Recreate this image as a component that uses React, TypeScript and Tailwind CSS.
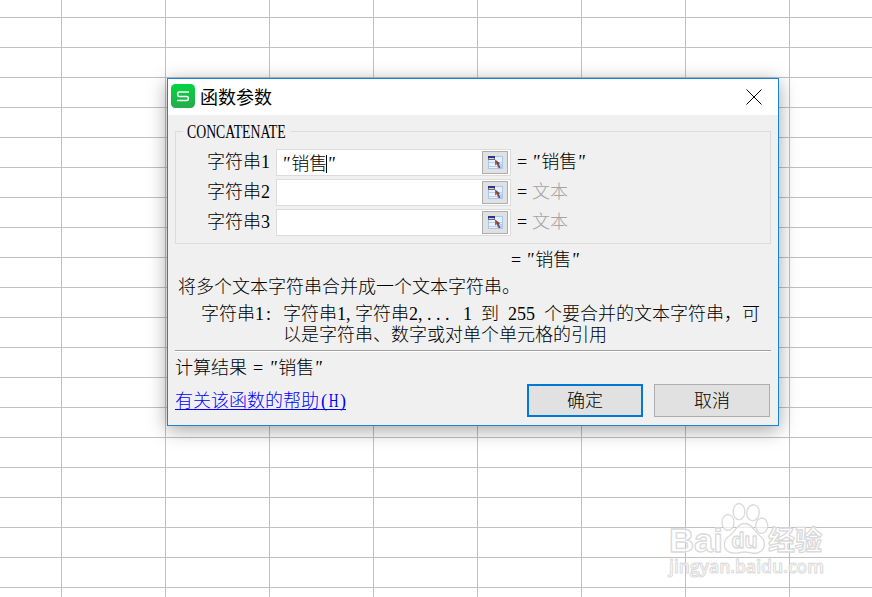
import type { ReactNode } from 'react';

interface Argument {
  label: string;
  value: string;
  preview?: string;
}

const args: Argument[] = [
  { label: '字符串1', value: '"销售"', preview: '"销售"' },
  { label: '字符串2', value: '' },
  { label: '字符串3', value: '' },
];

function SheetGrid() {
  return (
    <div className="grid w-[894px] grid-cols-[62px_repeat(8,104px)] grid-rows-[18px] auto-rows-[30px]">
      {Array.from({ length: 21 * 9 }, (_, i) => (
        <div key={i} className="border-b border-r border-[#c0c0c0]" />
      ))}
    </div>
  );
}

function Logo() {
  return (
    <svg width="24" height="24" viewBox="0 0 24 24" className="-mt-0.5">
      <defs>
        <linearGradient id="logo" x1="0" y1="0" x2="0" y2="1">
          <stop offset="0" stopColor="#00d540" />
          <stop offset="1" stopColor="#25ac4c" />
        </linearGradient>
      </defs>
      <rect width="24" height="24" rx="4.5" fill="url(#logo)" />
      <path d="M18 8H8.200Q6.700 8 6.700 9.500V10.900Q6.700 12.400 8.200 12.400H15.800Q17.300 12.400 17.300 13.900V15.100Q17.300 16.600 15.800 16.600H6" fill="none" stroke="#fff" strokeWidth="1.5" />
    </svg>
  );
}

function PickerIcon() {
  return (
    <svg width="15" height="13" viewBox="0 0 15 13" shapeRendering="crispEdges">
      <rect width="15" height="13" fill="#a5c8fb" />
      <rect x="7" y="1" width="7" height="3" fill="#e6f0ff" />
      <rect x="1" y="4" width="13" height="8" fill="#e8f1fd" />
      <rect x="9" y="8" width="5" height="4" fill="#b5cdfd" />
      <path d="M1 6.5h13M1 10.5h13" stroke="#c3cddd" />
      <rect width="7" height="2" fill="#2c3492" />
      <rect y="2" width="7" height="2" fill="#6a6a72" />
      <rect x="1" y="2" width="5" height="1" fill="#d4d4d8" />
      <g shapeRendering="auto">
        <path d="M7 3.5v6l1.6-1.2 2.2 3.9 1.5-.8-2-3.7 2-.3z" fill="#b9593f" />
        <path d="M7.400 4l4.600 3.500-1.600.3 1.900 3.800-.9.6-2.100-4z" fill="#5b5158" />
      </g>
    </svg>
  );
}

function Quoted({ children }: { children: ReactNode }) {
  return (
    <span>
      <i className="tracking-[1.6px]">"</i>{children}<i className="tracking-[1.6px]">"</i>
    </span>
  );
}

function ArgumentRow({ arg }: { arg: Argument }) {
  return (
    <div className="flex h-[27px] items-center">
      <span className="-mt-0.5 w-[94px] text-right">{arg.label}</span>
      <div className="ml-1.5 flex h-[27px] w-[235px] items-center border border-[#dcdcdc] bg-white pr-0.5">
        <div className="flex flex-1 items-center pl-[5px] pt-0.5">
          {arg.value && (
            <>
              <span><i className="tracking-[1.6px]">"</i>销售</span>
              <span className="-ml-px h-[18px] w-px bg-black" />
              <i>"</i>
            </>
          )}
        </div>
        <button className="flex h-[23px] w-[26px] items-center justify-center border border-[#adadad] bg-[#e1e1e1]">
          <PickerIcon />
        </button>
      </div>
      <div className="-mt-0.5 flex pl-1.5">
        <span className="w-[15px]">=</span>
        {arg.preview ? <Quoted>销售</Quoted> : <span className="text-[#a3a3a3]">文本</span>}
      </div>
    </div>
  );
}

function Watermark() {
  return (
    <svg className="absolute left-[664px] top-[498px]" width="170" height="84" viewBox="0 0 170 84">
      <g fill="#fff" fillOpacity="0.65" stroke="#dadada" strokeWidth="1.3" strokeLinejoin="round">
        <ellipse cx="64" cy="24.5" rx="6" ry="8" />
        <ellipse cx="75" cy="13.7" rx="5.8" ry="8.2" />
        <ellipse cx="89" cy="14.7" rx="6.2" ry="8" transform="rotate(8 89 14.7)" />
        <ellipse cx="97.7" cy="27.7" rx="6" ry="7.7" />
        <path d="M80.500 25.500C73 25.500 72 33 66.500 37C57 43 59 54 69 55C75 55.500 77 54 81 54C85 54 88 56 93 55C102 53 103 42 95 37C90 33 88 25.500 80.500 25.500Z" />
        <g className="font-['Liberation_Sans'] font-bold">
          <text x="5" y="54" fontSize="34" textLength="54" lengthAdjust="spacingAndGlyphs">Bai</text>
          <text x="67.5" y="50" fontSize="22" textLength="26" lengthAdjust="spacingAndGlyphs">du</text>
        </g>
        <text x="104" y="52" fontSize="27" textLength="54" className="font-['Noto_Sans_CJK_SC'] font-bold">经验</text>
        <text x="5" y="74.5" fontSize="18" strokeWidth="1" textLength="155" lengthAdjust="spacingAndGlyphs" className="font-['Open_Sans'] font-semibold">jingyan.baidu.com</text>
      </g>
    </svg>
  );
}

function FunctionDialog() {
  return (
    <div className="absolute left-[167px] top-[78px] flex h-[348px] w-[612px] flex-col border border-[#1883d7] bg-[#f0f0f0] shadow-[0_4px_18px_rgba(0,0,0,0.36)]">
      <div className="flex h-9 shrink-0 items-center bg-white pl-[3px] pr-4 font-['Noto_Sans_CJK_SC',sans-serif]">
        <Logo />
        <h1 className="-mt-0.5 ml-[5px] flex-1 text-[18px] font-normal leading-9">函数参数</h1>
        <svg width="16" height="16" viewBox="0 0 16 16" stroke="#000" className="-mt-px">
          <path d="M.5.500l15 15M15.500.500l-15 15" />
        </svg>
      </div>

      <div className="flex flex-1 flex-col px-[7px]">
        {/* Arguments */}
        <div className="mt-[5px] flex h-[124px] shrink-0 flex-col">
          <div className="flex h-[23px] shrink-0 items-center">
            <div className="mt-[11px] h-3 w-2 self-start border-l border-t border-[#dcdcdc]" />
            <div className="h-[23px] w-[108px] pl-1">
              <span className="block w-max origin-left scale-x-[0.765]">CONCATENATE</span>
            </div>
            <div className="mt-[11px] h-3 flex-1 self-start border-r border-t border-[#dcdcdc]" />
          </div>
          <div className="flex flex-1 flex-col gap-[3px] border-x border-b border-[#dcdcdc] pt-[6px]">
            {args.map((a) => <ArgumentRow key={a.label} arg={a} />)}
          </div>
        </div>

        {/* Result and description */}
        <div className="mt-[3px] flex h-[26px] items-center pl-[336px]">
          <span className="w-[15px]">=</span>
          <Quoted>销售</Quoted>
        </div>
        <p className="mt-0.5 h-[27px] pl-[3px]">将多个文本字符串合并成一个文本字符串。</p>
        <div className="flex h-12 pl-[26px] pt-0.5 leading-[21px]">
          <span className="w-[82px] shrink-0">字符串1<span className="ml-0.5">:</span></span>
          <div className="whitespace-nowrap">
            <p className="[word-spacing:4.5px]">
              字符串1<span className="tracking-[4.5px]">,</span>字符串2<span className="tracking-[4.5px]">,...</span> 1 到 255 个要合并的文本字符串，可
            </p>
            <p>以是字符串、数字或对单个单元格的引用</p>
          </div>
        </div>
        <div className="h-0.5 border-b border-t border-b-white border-t-[#a0a0a0]" />
        <p className="mt-[3px] h-[27px] leading-[26px]">
          计算结果<span className="mx-[6px]">=</span><Quoted>销售</Quoted>
        </p>

        {/* Actions */}
        <div className="mt-0.5 flex items-start">
          <a href="#" className="mt-[5px] h-[21px] w-[171px] border-b border-[#0000ff] leading-[25px] text-[#0000ff]">
            <span className="flex">有关该函数的帮助<span className="flex w-[27px] justify-between pl-0.5">(<span className="-mx-1 scale-x-75">H</span>)</span></span>
          </a>
          <button className="ml-auto h-[33px] w-[116px] border-2 border-[#0078d7] bg-[#e1e1e1] leading-[28px]">确定</button>
          <button className="ml-[11px] mr-px h-[33px] w-[116px] border border-[#adadad] bg-[#e1e1e1] leading-[30px]">取消</button>
        </div>
      </div>
    </div>
  );
}

export default function App() {
  return (
    <div className="relative h-[597px] w-[872px] overflow-hidden bg-white font-['Liberation_Serif','Noto_Sans_CJK_SC',serif] text-[18px] font-light leading-[24px] text-black">
      <SheetGrid />
      <FunctionDialog />
      <Watermark />
    </div>
  );
}
